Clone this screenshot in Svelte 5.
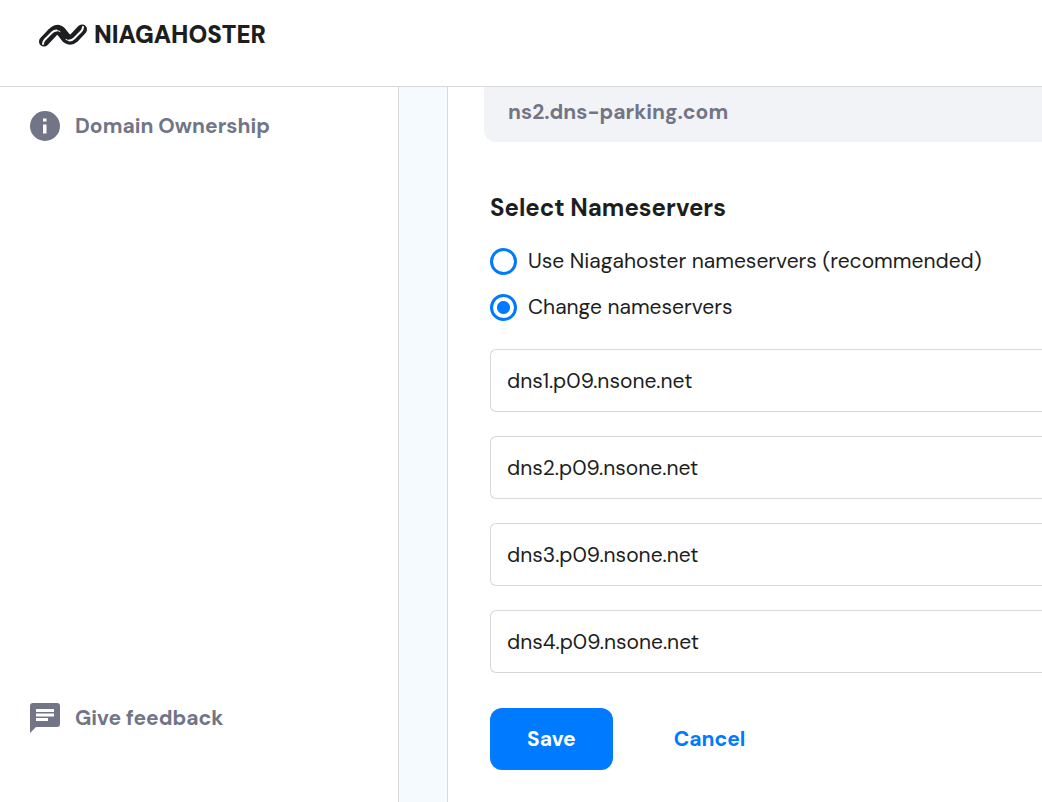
<script>
  let choice = $state('custom');
  let servers = $state([1, 2, 3, 4].map((n) => `dns${n}.p09.nsone.net`));
</script>

<div class="page">
  <header>
    <a class="brand" href="#home" aria-label="Niagahoster">
      <svg width="48" height="23" viewBox="0 0 48 23" fill="none" stroke-linecap="round" stroke-linejoin="round" aria-hidden="true">
        <path d="M5 17.500L13.500 8.500Q18 3.500 22.500 8L26 12.500Q30.500 18 35 14L43 5.500" stroke="#1d1e20" stroke-width="10" />
        <path d="M4 20Q4 17.500 6 15.500L13 8.500Q15 6.500 17.500 6.500M30.500 16.500Q33 16.500 35 14.500L42 7.500Q44 5.500 44 3" stroke="#fff" stroke-width="2" />
        <path d="M17.500 6.500Q19.500 6.500 21 7.500M27 15.500Q28.500 16.500 30.500 16.500" stroke="#fff" stroke-width="1" />
      </svg>
      <span>NIAGAHOSTER</span>
    </a>
  </header>
  <div class="body">
    <nav>
      <a class="item" href="#ownership">
        <svg width="30" height="30" viewBox="0 0 30 30" aria-hidden="true">
          <circle cx="15" cy="15" r="15" fill="#727586" />
          <path d="M13 7.500h3.500v3H13zM13 13.500h3.500v9H13z" fill="#fff" />
        </svg>
        <span>Domain Ownership</span>
      </a>
      <a class="item" href="#feedback">
        <svg width="30" height="30" viewBox="0 0 30 30" aria-hidden="true">
          <path d="M3 0h24a3 3 0 0 1 3 3v18a3 3 0 0 1-3 3H6l-6 6V3a3 3 0 0 1 3-3z" fill="#727586" />
          <path d="M6 6h18v3H6zM6 10.500h18v3H6zM6 15h12v3H6z" fill="#fff" />
        </svg>
        <span>Give feedback</span>
      </a>
    </nav>
    <div class="gutter"></div>
    <main>
      <div class="current">ns2.dns-parking.com</div>
      <form onsubmit={(e) => e.preventDefault()}>
        <h2>Select Nameservers</h2>
        <label class="option">
          <input type="radio" name="ns" value="default" bind:group={choice} />
          <span>Use Niagahoster nameservers (recommended)</span>
        </label>
        <label class="option">
          <input type="radio" name="ns" value="custom" bind:group={choice} />
          <span>Change nameservers</span>
        </label>
        <div class="fields">
          {#each servers as _, i}
            <input type="text" aria-label={`Nameserver ${i + 1}`} bind:value={servers[i]} />
          {/each}
        </div>
        <div class="actions">
          <button class="save" type="submit">Save</button>
          <button class="cancel" type="button">Cancel</button>
        </div>
      </form>
    </main>
  </div>
</div>

<style>
  :global(body) {
    margin: 0;
    background: #fff;
  }
  .page {
    display: flex;
    flex-direction: column;
    min-height: 100vh;
    font-family: "DM Sans", Inter, sans-serif;
    font-size: 21px;
    color: #1d1e20;
  }
  .page :global(*) {
    box-sizing: border-box;
    font-optical-sizing: none;
  }
  header {
    padding: 20px 39px 36px;
    border-bottom: 1px solid #d8d8d8;
  }
  .brand {
    display: flex;
    align-items: center;
    gap: 7px;
    width: max-content;
    font-size: 24px;
    font-weight: 900;
    line-height: 30px;
    color: #1d1e20;
    text-decoration: none;
  }
  .body {
    flex: 1;
    display: flex;
  }
  nav {
    flex: 0 0 399px;
    display: flex;
    flex-direction: column;
    justify-content: space-between;
    padding: 24px 30px 69px;
    border-right: 1px solid #d8d8d8;
  }
  .item {
    display: flex;
    align-items: center;
    gap: 15px;
    font-weight: 700;
    line-height: 30px;
    color: #727586;
    text-decoration: none;
  }
  .gutter {
    flex: 0 0 49px;
    background: #f4fafe;
    border-right: 1px solid #d8d8d8;
  }
  main {
    flex: 1;
    min-width: 0;
    padding-left: 36px;
  }
  .current {
    padding: 10px 24px 15px;
    border-radius: 0 0 0 12px;
    background: #f2f3f6;
    line-height: 30px;
    font-weight: 700;
    color: #727586;
  }
  form {
    padding: 50px 0 32px 6px;
  }
  h2 {
    margin: 0 0 22px;
    font-size: 24px;
    font-weight: 700;
    line-height: 32px;
  }
  .option {
    display: flex;
    align-items: center;
    gap: 11px;
    width: max-content;
    margin-bottom: 16px;
    line-height: 30px;
    font-weight: 400;
  }
  .option input {
    appearance: none;
    width: 27px;
    height: 27px;
    margin: 0;
    border: 3px solid #007aff;
    border-radius: 50%;
  }
  .option input:checked {
    background: radial-gradient(circle, #007aff 6px, #fff 7px);
  }
  .fields {
    display: grid;
    gap: 24px;
    margin-top: 27px;
  }
  .fields input {
    width: 100%;
    height: 63px;
    padding: 0 16px;
    border: 1px solid #d8d8d8;
    border-right: 0;
    border-radius: 6px 0 0 6px;
    background: #fff;
    font: inherit;
    font-optical-sizing: none;
    font-weight: 400;
    color: #1d1e20;
  }
  .actions {
    display: flex;
    gap: 24px;
    margin-top: 35px;
  }
  button {
    height: 62px;
    padding: 0 37px;
    border: 0;
    border-radius: 12px;
    background: none;
    font: inherit;
    font-optical-sizing: none;
    font-weight: 700;
    color: #007aff;
  }
  .save {
    background: #007aff;
    color: #fff;
  }
</style>
